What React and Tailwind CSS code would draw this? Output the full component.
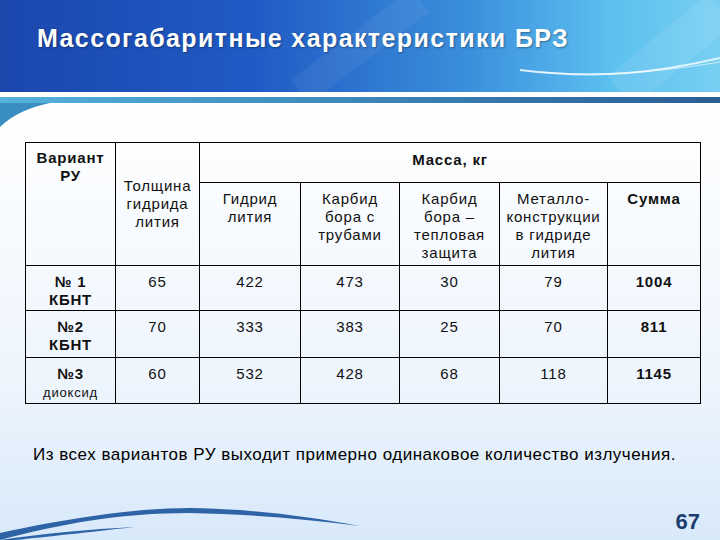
const headCell = "border border-black align-top text-center px-1";

const rows = [
  { name: "№ 1", sub: "КБНТ", subBold: true, v: ["65", "422", "473", "30", "79"], sum: "1004" },
  { name: "№2", sub: "КБНТ", subBold: true, v: ["70", "333", "383", "25", "70"], sum: "811" },
  { name: "№3", sub: "диоксид", subBold: false, v: ["60", "532", "428", "68", "118"], sum: "1145" },
];

const Header = () => (
  <div className="relative h-[92px] bg-[linear-gradient(90deg,#1b47ad_0%,#1f5ac4_35%,#3b8fdc_65%,#5cc0ef_85%,#78cff2_100%)] overflow-hidden">
    <svg className="absolute inset-0" width="720" height="92" viewBox="0 0 720 92">
      <path d="M520 70 C 600 80, 660 72, 720 58" stroke="#e8f8ff" strokeWidth="2" fill="none" opacity="0.9" />
      <path d="M540 72 C 610 78, 670 70, 720 62" stroke="#ffffff" strokeWidth="1" fill="none" opacity="0.6" />
      <path d="M300 92 L 420 0" stroke="#ffffff" strokeWidth="30" opacity="0.05" />
      <path d="M620 92 L 720 10" stroke="#ffffff" strokeWidth="40" opacity="0.08" />
    </svg>
    <h1 className="relative pl-[37px] pt-[26px] text-white font-bold text-[25px] leading-none tracking-[1.4px] font-['Liberation_Sans',Arial,sans-serif] [text-shadow:1px_1px_2px_rgba(0,0,0,0.35)]">
      Массогабаритные характеристики БРЗ
    </h1>
  </div>
);

export default function App() {
  return (
    <div className="relative w-[720px] h-[540px] overflow-hidden bg-[linear-gradient(180deg,#ffffff_20%,#eef5fd_70%,#d8e9fa_100%)] font-['Liberation_Sans',Arial,sans-serif] text-black">
      <Header />
      <div className="h-[5px] bg-white" />
      <div className="h-[6px] bg-[linear-gradient(90deg,#55b2dc_0%,#3f8fbf_40%,#2a5e93_100%)]" />
      <svg className="absolute left-0 top-[103px]" width="60" height="25" viewBox="0 0 60 25">
        <path d="M0 0 L50 0 C 30 4, 12 12, 0 24 Z" fill="#3b8ec2" />
      </svg>
      <svg className="absolute left-0 bottom-0" width="360" height="40" viewBox="0 0 360 40">
        <path d="M0 40 L0 33 C 60 20, 130 8, 190 8 C 250 9, 300 15, 360 26 C 300 18, 240 14, 190 13 C 120 13, 60 24, 0 40 Z" fill="#2e63a6" />
        <path d="M0 40 C 40 34, 90 29, 135 27 C 90 32, 45 37, 15 40 Z" fill="#2e63a6" />
      </svg>

      <div className="pl-[25px] pt-[39px]">
        <table className="border-collapse text-[15px] leading-[18px] tracking-[0.8px] text-[#111]">
          <colgroup>
            <col className="w-[90px]" />
            <col className="w-[84px]" />
            <col className="w-[101px]" />
            <col className="w-[99px]" />
            <col className="w-[100px]" />
            <col className="w-[108px]" />
            <col className="w-[93px]" />
          </colgroup>
          <thead>
            <tr className="h-[40px]">
              <th rowSpan={2} className={`${headCell} pt-[6px] font-bold`}>Вариант<br />РУ</th>
              <th rowSpan={2} className="border border-black text-center align-middle font-normal">Толщина<br />гидрида<br />лития</th>
              <th colSpan={5} className="border border-black text-center align-middle font-bold pb-[6px]">Масса, кг</th>
            </tr>
            <tr className="h-[83px]">
              <th className={`${headCell} pt-[7px] font-normal`}>Гидрид<br />лития</th>
              <th className={`${headCell} pt-[7px] font-normal`}>Карбид<br />бора с<br />трубами</th>
              <th className={`${headCell} pt-[7px] font-normal`}>Карбид<br />бора –<br />тепловая<br />защита</th>
              <th className={`${headCell} pt-[7px] font-normal`}>Металло-<br />конструкции<br />в гидриде<br />лития</th>
              <th className={`${headCell} pt-[7px] font-bold`}>Сумма</th>
            </tr>
          </thead>
          <tbody>
            {rows.map((r, i) => (
              <tr key={r.name} className={i === 0 ? "h-[45px]" : i === 1 ? "h-[47px]" : "h-[46px]"}>
                <td className="border border-black align-top text-center pt-[7px] font-bold">
                  {r.name}
                  <br />
                  <span className={r.subBold ? "font-bold" : "font-normal text-[13px]"}>{r.sub}</span>
                </td>
                {r.v.map((x, j) => (
                  <td key={j} className="border border-black align-top text-center pt-[7px]">{x}</td>
                ))}
                <td className="border border-black align-top text-center pt-[7px] font-bold">{r.sum}</td>
              </tr>
            ))}
          </tbody>
        </table>
      </div>

      <p className="pl-[33px] pt-[42px] text-[17px] leading-none text-black tracking-[0.5px]">
        Из всех вариантов РУ выходит примерно одинаковое количество излучения.
      </p>

      <div className="absolute right-[20px] bottom-[7px] text-[22px] font-bold text-[#1c3c6e] leading-none">67</div>
    </div>
  );
}
